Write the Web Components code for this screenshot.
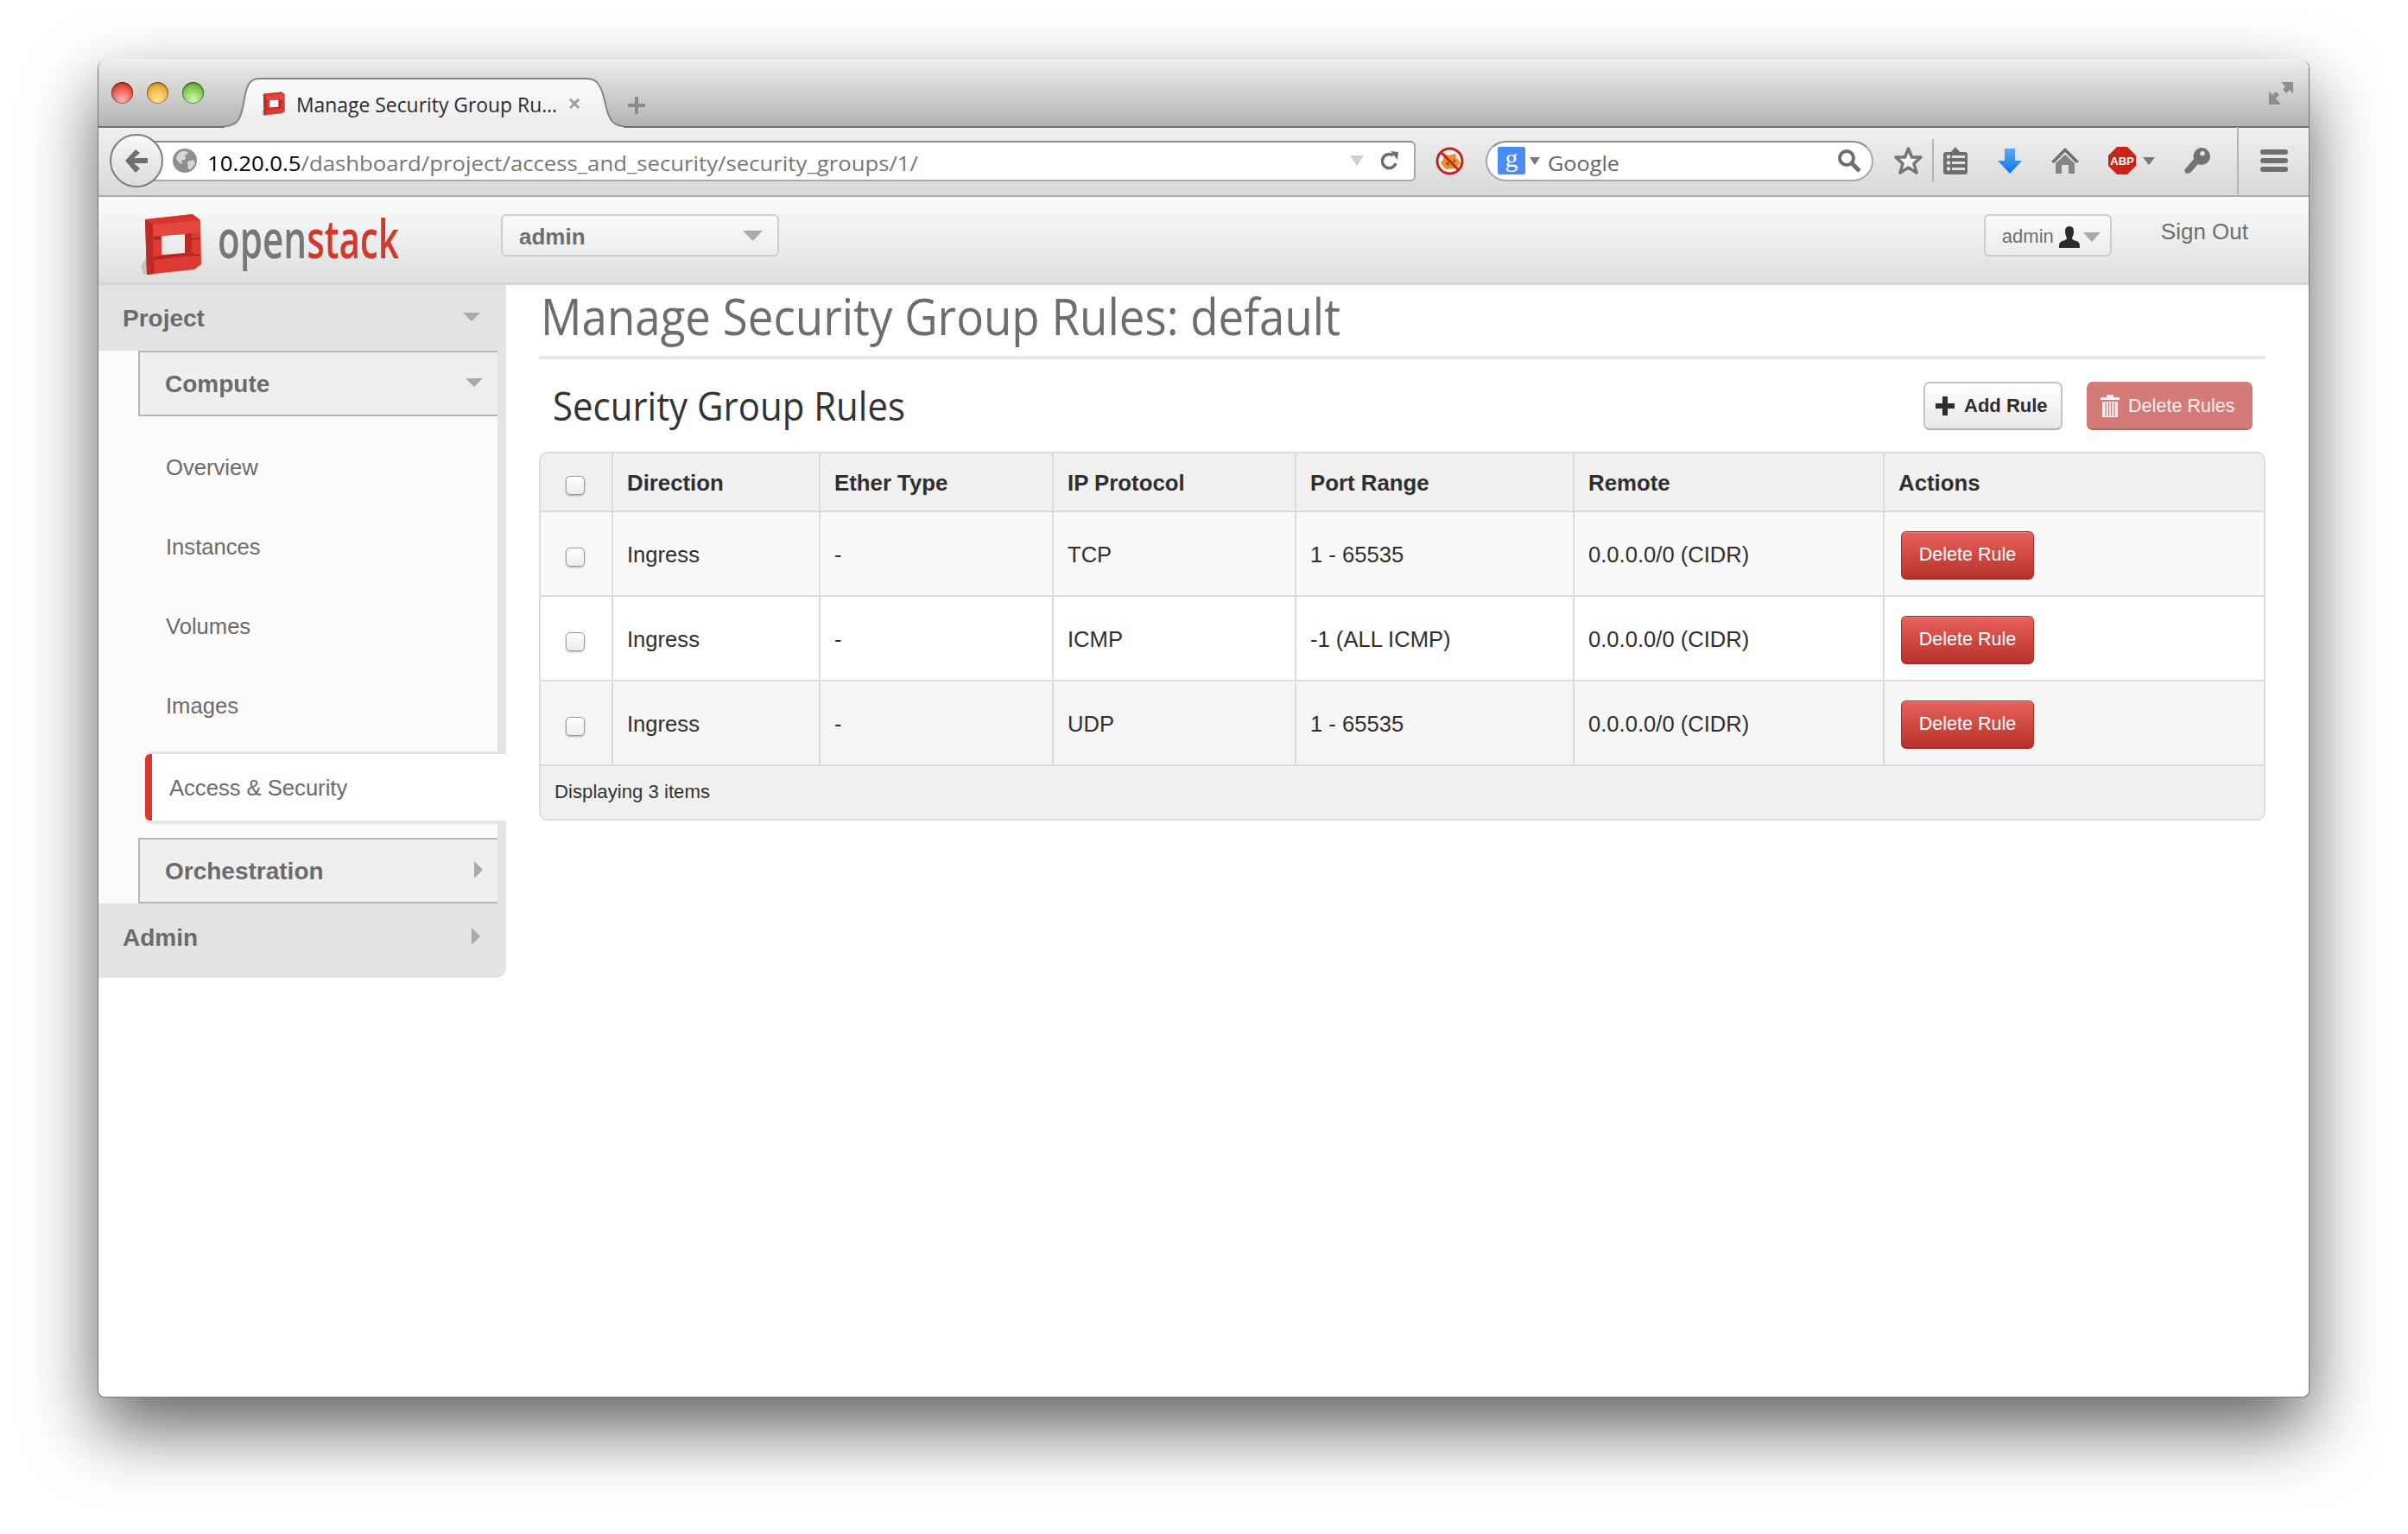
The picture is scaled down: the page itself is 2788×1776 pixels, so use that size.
<!DOCTYPE html>
<html>
<head>
<meta charset="utf-8">
<title>Manage Security Group Rules</title>
<style>
  html, body { margin: 0; height: 100%; overflow: hidden; background: #fff; }
  body { font-family: "Liberation Sans", Arial, sans-serif; color: #333; padding: 69px 0 0 113px; box-sizing: border-box; }
</style>
</head>
<body>
<browser-window>
  <window-titlebar slot="chrome"></window-titlebar>
  <window-toolbar slot="chrome"></window-toolbar>
  <app-header slot="chrome"></app-header>

  <side-nav slot="side">
    <nav-section label="Project" level="top" state="open"></nav-section>
    <nav-panel>
      <nav-section label="Compute" level="sub" state="open"></nav-section>
      <nav-item>Overview</nav-item>
      <nav-item>Instances</nav-item>
      <nav-item>Volumes</nav-item>
      <nav-item>Images</nav-item>
      <nav-item active>Access &amp; Security</nav-item>
      <nav-section label="Orchestration" level="sub" state="closed"></nav-section>
    </nav-panel>
    <nav-section label="Admin" level="top" state="closed"></nav-section>
  </side-nav>

  <main-pane slot="main">
    <page-heading><fit-text width="926">Manage Security Group Rules: default</fit-text></page-heading>
    <table-title>
      <fit-text slot="title" width="408">Security Group Rules</fit-text>
      <add-button slot="actions">Add Rule</add-button>
      <delete-all-button slot="actions">Delete Rules</delete-all-button>
    </table-title>
    <rules-panel>
      <rule-row tone="head">
        <rule-cell><rule-check></rule-check></rule-cell>
        <rule-cell>Direction</rule-cell>
        <rule-cell>Ether Type</rule-cell>
        <rule-cell>IP Protocol</rule-cell>
        <rule-cell>Port Range</rule-cell>
        <rule-cell>Remote</rule-cell>
        <rule-cell>Actions</rule-cell>
      </rule-row>
      <rule-row tone="odd">
        <rule-cell><rule-check></rule-check></rule-cell>
        <rule-cell>Ingress</rule-cell>
        <rule-cell>-</rule-cell>
        <rule-cell>TCP</rule-cell>
        <rule-cell>1 - 65535</rule-cell>
        <rule-cell>0.0.0.0/0 (CIDR)</rule-cell>
        <rule-cell><delete-button>Delete Rule</delete-button></rule-cell>
      </rule-row>
      <rule-row tone="even">
        <rule-cell><rule-check></rule-check></rule-cell>
        <rule-cell>Ingress</rule-cell>
        <rule-cell>-</rule-cell>
        <rule-cell>ICMP</rule-cell>
        <rule-cell>-1 (ALL ICMP)</rule-cell>
        <rule-cell>0.0.0.0/0 (CIDR)</rule-cell>
        <rule-cell><delete-button>Delete Rule</delete-button></rule-cell>
      </rule-row>
      <rule-row tone="last">
        <rule-cell><rule-check></rule-check></rule-cell>
        <rule-cell>Ingress</rule-cell>
        <rule-cell>-</rule-cell>
        <rule-cell>UDP</rule-cell>
        <rule-cell>1 - 65535</rule-cell>
        <rule-cell>0.0.0.0/0 (CIDR)</rule-cell>
        <rule-cell><delete-button>Delete Rule</delete-button></rule-cell>
      </rule-row>
      <rules-footer>Displaying 3 items</rules-footer>
    </rules-panel>
  </main-pane>
</browser-window>

<script>
// static elements only differ by their markup
function simple(name, html) {
  customElements.define(name, class extends HTMLElement {
    connectedCallback() {
      if (this.shadowRoot) return;
      this.attachShadow({ mode: 'open' });
      this.shadowRoot.innerHTML = html;
    }
  });
}

simple('os-cube', `
  <style>:host { display: block; width: 78px; height: 74px; } svg { display: block; width: 100%; height: 100%; }</style>
  <svg viewBox="0 0 78 74">
    <path d="M5 62 L11 53 L14 71 L8 72 Z" fill="#b5b5b5" opacity=".7"/>
    <path fill-rule="evenodd" d="M10 8 L65 2 L74 9 L75 60 L67 66 L12 72 Z M29 27 L56 25 L56 47 L29 49 Z" fill="#dc3b33"/>
    <path d="M10 8 L65 2 L74 9 L19 14 Z" fill="#d8352e"/>
    <path d="M19 14 L74 9 L74 24 L56 25 L29 27 L19 28 Z" fill="#e5473f"/>
    <path d="M10 8 L19 14 L20 71 L12 72 Z" fill="#bc2b26"/>
    <path d="M56 25 L64 24 L64 45 L56 47 Z" fill="#b52a25"/>
    <path d="M20 29 L29 28 M20 31 L29 30 M20 52 L66 47 M20 54 L66 49 M64 31 L74 30 M64 50 L74 49" stroke="#a92420" stroke-width="1.6" fill="none"/>
  </svg>`);

simple('browser-window', `
  <style>
    :host { display: flex; flex-direction: column; width: 2561px; height: 1549px; box-sizing: border-box; background: #fff;
      border: 1px solid #777; border-top: 0; border-radius: 10px 10px 8px 8px; box-shadow: 0 36px 82px rgba(0,0,0,.62); overflow: hidden; }
    .page { flex: 1; display: flex; min-height: 0; align-items: flex-start; }
  </style>
  <slot name="chrome"></slot>
  <div class="page"><slot name="side"></slot><slot name="main"></slot></div>`);

simple('window-titlebar', `
  <style>
    :host { display: flex; align-items: flex-end; height: 79px; box-sizing: border-box; padding-left: 15px;
      background: linear-gradient(#ededed, #e2e2e2 18%, #b3b3b3); border-top: 1px solid #f6f6f6; border-bottom: 2px solid #6d6d6d; }
    .lights { display: flex; gap: 16px; align-self: flex-start; margin-top: 25px; }
    .l { width: 25px; height: 25px; border-radius: 50%; box-shadow: inset 0 0 0 1px rgba(0,0,0,.35), inset 0 2px 3px rgba(0,0,0,.25); }
    .r { background: radial-gradient(circle at 50% 80%, #ffb5ad, #ea4f47 60%, #c8322c); }
    .y { background: radial-gradient(circle at 50% 80%, #ffe39a, #edb03a 60%, #c98a1c); }
    .g { background: radial-gradient(circle at 50% 80%, #d4f7a8, #7fc450 60%, #579c33); }
    .tab { position: relative; width: 462px; height: 58px; margin-left: 24px; margin-bottom: -2px; flex: none; display: flex; align-items: center; padding: 2px 0 0 41px; box-sizing: border-box; }
    .tab > svg.shape { position: absolute; left: 0; top: 0; }
    .tab os-cube { position: relative; width: 30px; height: 30px; }
    .title { position: relative; margin-left: 12px; font: 24px "Open Sans", sans-serif; color: #2b2b2b; }
    .close { position: relative; margin-left: 13px; color: #9c9c9c; font: bold 24px "Liberation Sans", sans-serif; line-height: 1; }
    .plus { margin: 0 0 13px 4px; }
    .full { margin: 0 17px 24px auto; }
  </style>
  <div class="lights"><div class="l r"></div><div class="l y"></div><div class="l g"></div></div>
  <div class="tab">
    <svg class="shape" width="462" height="58" viewBox="0 0 462 58">
      <defs><linearGradient id="t" x1="0" y1="0" x2="0" y2="1"><stop offset="0" stop-color="#fbfbfb"/><stop offset="1" stop-color="#ececec"/></linearGradient></defs>
      <path d="M0 56 C16 56 19 46 22 30 C25 10 28 1 40 1 L420 1 C432 1 436 10 440 26 C444 46 448 56 462 56 V58 H0 Z" fill="url(#t)"/>
      <path d="M0 56 C16 56 19 46 22 30 C25 10 28 1 40 1 L420 1 C432 1 436 10 440 26 C444 46 448 56 462 56" fill="none" stroke="#858585" stroke-width="2"/>
    </svg>
    <os-cube></os-cube>
    <fit-text class="title" width="302">Manage Security Group Ru…</fit-text>
    <span class="close">×</span>
  </div>
  <svg class="plus" width="22" height="22" viewBox="0 0 22 22"><path d="M9 1 H13 V9 H21 V13 H13 V21 H9 V13 H1 V9 H9 Z" fill="#8b8b8b"/></svg>
  <svg class="full" width="30" height="30" viewBox="0 0 30 30"><path d="M15 3 H29 V17 L25 12 L21 16 L17 12 L20 8 Z M1 29 V14 L5 18 L9 14 L13 18 L9 22 L15 29 Z" fill="#8e8e8e"/></svg>`);

simple('window-toolbar', `
  <style>
    :host { display: flex; align-items: center; height: 80px; box-sizing: border-box; padding: 0 0 2px 13px; flex: none;
      background: linear-gradient(#efefef, #d9d9d9); border-bottom: 2px solid #ababab; font: 24px "Open Sans", sans-serif; }
    svg { display: block; flex: none; }
    .back { position: relative; z-index: 1; flex: none; width: 62px; height: 62px; box-sizing: border-box; border-radius: 50%; border: 2px solid #7d7d7d;
      background: linear-gradient(#f8f8f8, #dcdcdc); display: flex; align-items: center; justify-content: center; margin-right: -20px; }
    .url { width: 1470px; height: 47px; box-sizing: border-box; flex: none; background: #fff; border: 2px solid #a8a8a8; border-top-color: #8e8e8e; border-left: 0;
      border-radius: 0 6px 6px 0; display: flex; align-items: center; padding-left: 31px; }
    .url b { font-weight: 400; color: #000; }
    .url i { font-style: normal; color: #777; }
    .url fit-text { margin: 4px 0 0 12px; }
    .url .tri { margin-left: 500px; }
    .url .rel { margin-left: 20px; }
    .ns { margin-left: 23px; }
    .search { margin-left: 25px; width: 449px; height: 47px; flex: none; box-sizing: border-box; background: #fff; border: 2px solid #a8a8a8; border-top-color: #8e8e8e; border-radius: 24px;
      display: flex; align-items: center; padding-left: 12px; color: #666; }
    .g8 { width: 32px; height: 32px; background: #4c8bf5; border-radius: 2px; color: #fff; text-align: center; font: 30px/26px "Liberation Serif", serif; flex: none; }
    .search fit-text { margin: 4px 0 0 9px; }
    .search .m { margin-left: auto; margin-right: 12px; }
    .sep { width: 2px; flex: none; background: #b5b5b5; }
  </style>
  <div class="back"><svg width="30" height="30" viewBox="0 0 30 30"><path d="M2 15 L14 2 L19 6 L12 12 H28 V18 H12 L19 24 L14 29 Z" fill="#6f6f6f"/></svg></div>
  <div class="url">
    <svg width="28" height="28" viewBox="0 0 28 28"><circle cx="14" cy="14" r="14" fill="#8f8f8f"/><path d="M8 4 C12 2 17 3 18 5 L14 8 L15 12 L10 14 L11 18 L8 17 L4 12 L5 8 Z M17 15 L24 13 L26 17 L21 24 L18 24 Z" fill="#d8d8d8"/></svg>
    <fit-text width="823"><b>10.20.0.5</b><i>/dashboard/project/access_and_security/security_groups/1/</i></fit-text>
    <svg class="tri" width="16" height="12" viewBox="0 0 16 12"><path d="M0 0 H16 L8 12 Z" fill="#cfcfcf"/></svg>
    <svg class="rel" width="20" height="22" viewBox="0 0 20 22"><path d="M17 14 A8 8 0 1 1 14 5" fill="none" stroke="#6d6d6d" stroke-width="3.5"/><path d="M11 0 L20 1 L19 10 Z" fill="#6d6d6d"/></svg>
  </div>
  <svg class="ns" width="33" height="33" viewBox="0 0 33 33"><circle cx="16.5" cy="16.5" r="14" fill="#f4f4f4"/><path d="M6 19 L10 12 L9 7 L15 10 L23 8 L24 12 L29 19 L22 25 L12 26 Z" fill="#e8912f"/><path d="M11 20 L15 17 L16 22 Z M20 14 L24 16 L21 19 Z" fill="#8a5a1f"/><circle cx="16.5" cy="16.5" r="14.5" fill="none" stroke="#c6231c" stroke-width="3"/><path d="M7 7 L26 26" stroke="#c6231c" stroke-width="3"/></svg>
  <div class="search">
    <div class="g8">g</div>
    <svg style="margin-left:5px" width="12" height="9" viewBox="0 0 12 9"><path d="M0 0 H12 L6 9 Z" fill="#777"/></svg>
    <fit-text width="83">Google</fit-text>
    <svg class="m" width="28" height="28" viewBox="0 0 28 28"><circle cx="11" cy="11" r="8" fill="none" stroke="#6e6e6e" stroke-width="4"/><path d="M17 17 L26 26" stroke="#6e6e6e" stroke-width="5"/></svg>
  </div>
  <svg style="margin-left:24px" width="33" height="32" viewBox="0 0 33 32"><path d="M16.5 2 L20.5 12 L31 12 L23 19.5 L26 30 L16.5 24 L7 30 L10 19.5 L2 12 L12.5 12 Z" fill="#f3f3f3" stroke="#767676" stroke-width="3.5" stroke-linejoin="round"/></svg>
  <div class="sep" style="height:50px;margin-left:11px"></div>
  <svg style="margin-left:11px" width="28" height="32" viewBox="0 0 28 32"><path d="M14 0 L19 6 H25 Q28 6 28 9 V29 Q28 32 25 32 H3 Q0 32 0 29 V9 Q0 6 3 6 H9 Z" fill="#6e6e6e"/><path d="M10 10 H25 V13 H10 Z M10 17 H25 V20 H10 Z M10 24 H25 V27 H10 Z" fill="#e4e4e4"/><g fill="#e4e4e4"><circle cx="6" cy="11.5" r="2.2"/><circle cx="6" cy="18.5" r="2.2"/><circle cx="6" cy="25.5" r="2.2"/></g></svg>
  <svg style="margin-left:35px" width="28" height="30" viewBox="0 0 28 30"><defs><linearGradient id="d" x1="0" y1="0" x2="0" y2="1"><stop offset="0" stop-color="#5eaaf5"/><stop offset="1" stop-color="#0a74e8"/></linearGradient></defs><path d="M8 1 H20 V15 H28 L14 30 L0 15 H8 Z" fill="url(#d)"/></svg>
  <svg style="margin-left:34px" width="32" height="30" viewBox="0 0 32 30"><path d="M16 0 L32 16 L29 18 L16 5 L3 18 L0 16 Z" fill="#6e6e6e"/><path d="M16 8 L27 18 V30 H20 V20 H12 V30 H5 V18 Z" fill="#858585"/></svg>
  <svg style="margin-left:34px;overflow:visible" width="32" height="32" viewBox="0 0 32 32"><path d="M10 0 H22 L32 10 V22 L22 32 H10 L0 22 V10 Z" fill="#cc2318"/><text x="16" y="21" text-anchor="middle" font-family="Liberation Sans" font-weight="700" font-size="13" fill="#fff">ABP</text></svg>
  <svg style="margin-left:8px" width="14" height="9" viewBox="0 0 14 9"><path d="M0 0 H14 L7 9 Z" fill="#777"/></svg>
  <svg style="margin-left:34px" width="30" height="30" viewBox="0 0 30 30"><path fill-rule="evenodd" d="M20 0 A10 10 0 0 1 20 20 A10 10 0 0 1 16 19 L7 29 L2 30 L0 26 L11 13 A10 10 0 0 1 20 0 Z M21 4 A2.8 2.8 0 1 0 21.01 4 Z" fill="#737373"/></svg>
  <div class="sep" style="height:78px;margin-left:31px"></div>
  <svg style="margin-left:25px" width="32" height="26" viewBox="0 0 32 26"><g fill="#6f6f6f"><rect width="32" height="6" rx="3"/><rect y="10" width="32" height="6" rx="3"/><rect y="20" width="32" height="6" rx="3"/></g></svg>`);

simple('app-header', `
  <style>
    :host { display: flex; align-items: flex-start; height: 102px; box-sizing: border-box; flex: none; padding: 18px 70px 0 44px; color: #6e6e6e;
      background: linear-gradient(#fbfbfb, #dfdfdf); border-bottom: 3px solid #d4d4d4; font-size: 26px; }
    .logo { display: flex; width: 422px; flex: none; }
    .word { margin: -8px 0 0 16px; font: 600 62px/1.2 "Open Sans", sans-serif; color: #777; height: 74px; }
    .word span { color: #d3382c; }
    .box { box-sizing: border-box; height: 49px; margin-top: 2px; border: 2px solid #cdcdcd; border-radius: 6px; background: linear-gradient(#fafafa, #ececec); display: flex; align-items: center; }
    .project { width: 322px; padding: 4px 17px 0 19px; font-weight: 700; justify-content: space-between; }
    .project svg { margin-top: -4px; }
    .user { margin-left: auto; width: 148px; padding: 3px 0 0 19px; font-size: 22px; }
    .user svg:first-of-type { margin-left: 5px; }
    .out { margin: 7px 0 0 57px; }
    .user .c { margin-left: 3px; }
  </style>
  <div class="logo">
    <os-cube></os-cube>
    <fit-text class="word" width="210">open<span>stack</span></fit-text>
  </div>
  <div class="box project">admin <svg width="23" height="12" viewBox="0 0 23 12"><path d="M0 0 H23 L11.5 12 Z" fill="#aaa"/></svg></div>
  <div class="box user">admin<svg width="26" height="25" viewBox="0 0 26 25"><path d="M13 0 C17 0 18 3 18 6 C18 9 17 12 16 13 C16 15 17 16 21 17 C24 18 25 19 25 25 H1 C1 19 2 18 5 17 C9 16 10 15 10 13 C9 12 8 9 8 6 C8 3 9 0 13 0 Z" fill="#2b2b2b"/></svg><svg class="c" width="20" height="11" viewBox="0 0 20 11"><path d="M0 0 H20 L10 11 Z" fill="#aaa"/></svg></div>
  <div class="out">Sign Out</div>`);

simple('side-nav', `
  <style>:host { display: flex; flex-direction: column; width: 472px; flex: none; border-radius: 0 0 12px 0; overflow: hidden; }</style>
  <slot></slot>`);

simple('nav-panel', `
  <style>:host { display: block; background: #fafafa; border-right: 10px solid #e3e3e3; }</style>
  <slot></slot>`);

class NavSection extends HTMLElement {
  connectedCallback() {
    const sub = this.getAttribute('level') === 'sub';
    const open = this.getAttribute('state') === 'open';
    const label = this.getAttribute('label');
    // orchestration closes the panel with a gap above it
    const gap = label === 'Orchestration' ? 'margin-top:20px;' : '';
    this.attachShadow({ mode: 'open' });
    this.shadowRoot.innerHTML = `
      <style>
        :host { display: flex; align-items: center; justify-content: space-between; box-sizing: border-box; font-weight: 700; font-size: 28px; color: #6b6b6b; ${gap}
          height: ${label === 'Admin' ? 86 : 76}px; padding: ${label === 'Admin' ? '0 30px 6px 28px' : sub ? '2px 17px 0 29px' : '2px 30px 0 28px'};
          background: ${sub ? '#efefef' : '#e3e3e3'}; ${sub ? 'margin-left:46px;border:2px solid #b7b7b7;border-right:0;' : ''} }
        svg { margin-top: -4px; }
      </style>
      <span>${label}</span>
      <svg width="${open ? 20 : 10}" height="${open ? 10 : 20}" viewBox="0 0 ${open ? '20 10' : '10 20'}"><path d="${open ? 'M0 0 H20 L10 10 Z' : 'M0 0 L10 10 L0 20 Z'}" fill="#aaa"/></svg>`;
  }
}
customElements.define('nav-section', NavSection);

class NavItem extends HTMLElement {
  connectedCallback() {
    this.attachShadow({ mode: 'open' });
    this.shadowRoot.innerHTML = `
      <style>
        :host { display: flex; align-items: center; height: 92px; padding: 2px 0 0 78px; box-sizing: border-box; font-size: 25.6px; color: #6b6b6b; }
        :host(:nth-of-type(1)) { margin-top: 12px; }
        :host([active]) { position: relative; height: 77px; margin: 11px -10px 0 54px; padding: 2px 0 0 20px; background: #fff; border-left: 8px solid #d9392a; border-radius: 6px 0 0 6px;
          box-shadow: 0 -3px 0 #e6e6e6, 0 4px 0 #e6e6e6; }
      </style>
      <slot></slot>`;
  }
}
customElements.define('nav-item', NavItem);

simple('main-pane', `
  <style>:host { display: block; flex: 1; min-width: 0; padding: 0 50px 0 38px; }</style>
  <slot></slot>`);

simple('page-heading', `
  <style>:host { display: block; height: 86px; box-sizing: border-box; border-bottom: 4px solid #e8e8e8; padding: 0 0 0 2px; font: 58px/72px "Open Sans", sans-serif; color: #6d6d6d; }</style>
  <slot></slot>`);

simple('table-title', `
  <style>
    :host { display: flex; align-items: center; justify-content: space-between; height: 107px; box-sizing: border-box; padding: 0 15px 2px 16px; font: 46px "Open Sans", sans-serif; color: #333; }
    .a { display: flex; gap: 28px; margin-top: 2px; }
  </style>
  <slot name="title"></slot>
  <div class="a"><slot name="actions"></slot></div>`);

const plusIcon = '<svg width="22" height="22" viewBox="0 0 22 22"><path d="M8 0 H14 V8 H22 V14 H14 V22 H8 V14 H0 V8 H8 Z" fill="#2d2d2d"/></svg>';
const trashIcon = '<svg width="22" height="26" viewBox="0 0 22 26"><path d="M7 0 H15 V3 H22 V6 H0 V3 H7 Z M2 8 H20 V26 H2 Z" fill="#fbeeee"/><path d="M6 9 V25 M9.5 9 V25 M12.5 9 V25 M16 9 V25" stroke="#d47b79" stroke-width="1.2"/></svg>';

simple('add-button', `
  <style>:host { display: flex; align-items: center; gap: 11px; height: 56px; width: 161px; box-sizing: border-box; padding-left: 12px; border: 2px solid #c4c4c4; border-bottom-color: #b2b2b2; border-radius: 7px;
    background: linear-gradient(#fff, #e8e8e8); font: 700 22px "Liberation Sans", sans-serif; color: #2d2d2d; }</style>
  ${plusIcon}<slot></slot>`);

simple('delete-all-button', `
  <style>:host { display: flex; align-items: center; gap: 10px; height: 56px; width: 192px; box-sizing: border-box; padding: 2px 0 0 16px; border-radius: 7px; border-bottom: 2px solid #b86765;
    background: #d47b79; font: 21.6px "Liberation Sans", sans-serif; color: #fbeeee; }</style>
  ${trashIcon}<slot></slot>`);

simple('rules-panel', `
  <style>:host { display: block; border: 2px solid #dcdcdc; border-radius: 10px; overflow: hidden; background: #fff; }</style>
  <slot></slot>`);

class RuleRow extends HTMLElement {
  connectedCallback() {
    const tone = this.getAttribute('tone');
    const bg = { head: '#f0f0f0', odd: '#f9f9f9', even: '#fff', last: '#f5f5f5' }[tone];
    this.attachShadow({ mode: 'open' });
    this.shadowRoot.innerHTML = `
      <style>
        :host { display: grid; grid-template-columns: 84px 240px 270px 281px 322px 359px 1fr; background: ${bg}; height: ${tone === 'head' ? 68 : 98}px;
          box-sizing: border-box; border-bottom: 2px solid #dcdcdc; font-size: ${tone === 'head' ? 25.8 : 25.6}px; font-weight: ${tone === 'head' ? 700 : 400}; color: #2f2f2f; }
      </style>
      <slot></slot>`;
  }
}
customElements.define('rule-row', RuleRow);

simple('rule-cell', `
  <style>
    :host { display: flex; align-items: center; padding: 3px 0 0 16px; border-right: 2px solid #dcdcdc; min-width: 0; }
    :host(:last-child) { border-right: 0; }
    :host(:first-child) { padding: 8px 0 0 29px; }
  </style>
  <slot></slot>`);

simple('rule-check', `
  <style>:host { display: block; width: 22px; height: 22px; box-sizing: border-box; border: 1px solid #9a9a9a; border-radius: 5px; background: linear-gradient(#fff, #ececec); box-shadow: 0 1px 2px rgba(0,0,0,.3); }</style>`);

simple('delete-button', `
  <style>:host { display: flex; align-items: center; justify-content: center; margin-left: 3px; width: 154px; height: 56px; box-sizing: border-box; border: 1px solid #a82c26; border-bottom-width: 2px; border-radius: 6px;
    background: linear-gradient(#e8615c, #b8332b); font-size: 21.5px; color: #fff; box-shadow: inset 0 1px 0 rgba(255,255,255,.2); }</style>
  <slot></slot>`);

simple('rules-footer', `
  <style>:host { display: flex; align-items: center; height: 61px; padding: 0 0 1px 16px; box-sizing: border-box; background: #f0f0f0; font-size: 22.2px; color: #333; }</style>
  <slot></slot>`);

// squeezes real text to the width the condensed fonts of the original took;
// defined last so the fonts of the hosts around it are in place when it measures
class FitText extends HTMLElement {
  connectedCallback() {
    this.attachShadow({ mode: 'open' });
    const width = +this.getAttribute('width');
    this.shadowRoot.innerHTML = `
      <style>
        :host { display: inline-block; white-space: nowrap; width: ${width}px; }
        span { display: inline-block; transform-origin: 0 50%; }
      </style>
      <span><slot></slot></span>`;
    const span = this.shadowRoot.querySelector('span');
    span.style.transform = `scaleX(${width / span.getBoundingClientRect().width})`;
  }
}
customElements.define('fit-text', FitText);
</script>
</body>
</html>
